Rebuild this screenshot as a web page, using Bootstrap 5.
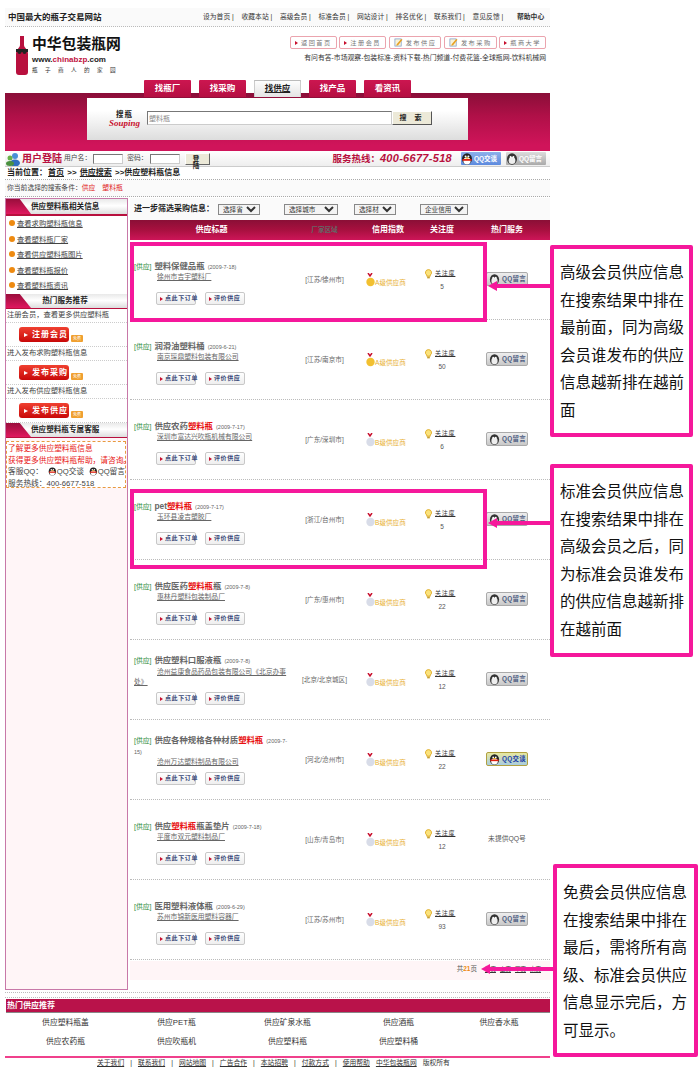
<!DOCTYPE html>
<html lang="zh-CN">
<head>
    <meta charset="UTF-8">
    <meta name="viewport" content="width=device-width, initial-scale=1.0">
    <title>中华包装瓶网 - 供应塑料瓶信息</title>
    <link href="https://cdn.jsdelivr.net/npm/bootstrap@5.3.0/dist/css/bootstrap.min.css" rel="stylesheet">
    <style>
        html, body { margin: 0; background: #fff; }
        body { font-family: "Liberation Sans", "Noto Sans CJK SC", sans-serif; font-size: 7px; line-height: 1.2; color: #333; }
        a { color: inherit; text-decoration: none; }
        .page-wrap { position: relative; width: 700px; height: 1071px; overflow: hidden; }
        .site { width: 545px; margin-left: 5px; padding-top: 8px; }

        /* 顶部 */
        .top-strip { height: 19px; padding: 0 6px 0 3px; background: #fafafa; border-bottom: 1px dotted #bbb; }
        .top-slogan { font-size: 8.5px; font-weight: 700; color: #222; }
        .top-nav span { width: 38.5px; font-size: 6.8px; color: #333; white-space: nowrap; }
        .top-nav span:last-child { width: 27px; margin-left: 6px; font-weight: 700; }
        .head-row { height: 53px; }
        .logo-box { margin-left: 11px; padding-top: 9px; gap: 4px; }
        .logo-name { font-size: 14.8px; line-height: 17px; font-weight: 700; color: #111; white-space: nowrap; }
        .logo-url { font-size: 8px; line-height: 9px; font-weight: 700; color: #222; margin-top: 2px; }
        .logo-url i { font-style: normal; color: #c0123f; }
        .logo-sub { font-size: 5.6px; line-height: 9px; letter-spacing: 7.4px; color: #333; margin-top: 2px; white-space: nowrap; }
        .head-right { padding: 9px 4px 0 0; width: 260px; }
        .head-btn { height: 13px; padding: 0 4px; gap: 3px; background: #fff; border: 1px solid #eba4ae; border-radius: 2px; font-size: 6.2px; letter-spacing: 1.5px; color: #777; white-space: nowrap; }
        .head-btn svg { flex: none; }
        .tri-r { width: 0; height: 0; flex: none; border-left: 3px solid #c8102e; border-top: 2.5px solid transparent; border-bottom: 2.5px solid transparent; }
        .head-links { margin-top: 5px; font-size: 6.85px; color: #333; white-space: nowrap; text-align: right; }

        /* 标签 + 搜索 */
        .tab-strip { height: 13px; padding-left: 139px; gap: 8px; position: relative; z-index: 2; }
        .site-tab { width: 47px; height: 17px; font-size: 8.5px; font-weight: 700; color: #fff; background: linear-gradient(#cc1650, #b50f42); border-top-left-radius: 1px; border-top-right-radius: 1px; }
        .site-tab.on { color: #222; background: linear-gradient(#fff, #e4e4e4); text-decoration: underline; box-shadow: inset 0 1px 0 #bbb, inset 1px 0 0 #ccc, inset -1px 0 0 #ccc; }
        .hero-band { height: 58px; padding: 5px 82px 0; background: linear-gradient(#8a0e38, #b01048 40%, #d0145a 90%); }
        .hero-panel { height: 42px; padding: 13px 0 0 22px; gap: 7px; background: linear-gradient(#fff 30%, #ddd); }
        .sou-logo { width: 31px; line-height: 1; text-align: center; }
        .sou-logo b { display: block; font-size: 7.5px; color: #222; letter-spacing: 1px; }
        .sou-logo i { display: block; font-family: "Liberation Serif", serif; font-size: 9px; font-weight: 700; color: #c8102e; }
        .hero-input { width: 245px; height: 14px; padding: 0 1px; font-size: 7px; color: #888; background: #fff; border: 1px solid #777; border-right-color: #ccc; border-bottom-color: #ccc; }
        .hero-btn { width: 40px; height: 14px; margin-left: -7px; font-size: 7px; font-weight: 700; letter-spacing: 3px; color: #222; background: #ece9d8; border: 1px solid #fff; border-right-color: #555; border-bottom-color: #555; }

        /* 登陆条 */
        .login-strip { height: 16px; padding-left: 1px; background: linear-gradient(#fff, #eee); border-bottom: 1px solid #ccc; }
        .login-title { margin: 0 2px; font-size: 10px; font-weight: 700; color: #b8103e; white-space: nowrap; }
        .login-label { font-size: 6.8px; color: #444; white-space: nowrap; }
        .login-input { width: 30px; height: 10px; margin: 0 4px 0 2px; background: #fff; border: 1px solid #777; border-right-color: #ccc; border-bottom-color: #ccc; }
        .login-btn { width: 25px; height: 12px; margin-left: 1px; font-size: 6.5px; font-weight: 700; letter-spacing: 2px; color: #222; background: #ece9d8; border: 1px solid #fff; border-right-color: #666; border-bottom-color: #666; }
        .hotline { margin-left: auto; margin-right: 9px; font-size: 9.5px; font-weight: 700; color: #b8103e; white-space: nowrap; }
        .hotline i { font-size: 11px; letter-spacing: .3px; }
        .qq-head { width: 40px; height: 13px; margin-right: 5px; gap: 1px; border-radius: 1px; font-size: 6.5px; font-weight: 700; color: #fff; background: linear-gradient(#8db0ea, #5d8ade); }
        .qq-head.gray { margin-right: 4px; background: linear-gradient(#dcdcdc, #aaa); }

        .crumb-row { height: 13px; padding-left: 2px; font-size: 8px; font-weight: 700; color: #222; border-bottom: 1px dotted #aaa; }
        .crumb-row u { margin: 0 1px; }
        .cond-row { height: 17px; padding-left: 2px; font-size: 6.8px; color: #444; background: #fafafa; border-bottom: 1px dotted #aaa; }
        .cond-row em { margin-right: 7px; font-style: normal; color: #e02020; }

        /* 主体 */
        .main-area { height: 792px; margin-top: 1px; }
        .side-col { width: 123px; flex: none; background: #fff5f7; border: 1px solid #c878a8; }
        .side-head { height: 17px; background: linear-gradient(#e9e9e9, #fff 45%, #ddd); border-bottom: 2px solid #b8103e; }
        .side-head.thin { height: 15px; border-bottom-width: 1px; }
        .side-head span { flex: 1; padding-right: 28px; text-align: center; font-size: 7.6px; font-weight: 700; color: #222; white-space: nowrap; }
        .head-flag { width: 25px; flex: none; height: 100%; background: linear-gradient(#9a0e3c, #e0185f); clip-path: polygon(0 0, 55% 0, 100% 100%, 0 100%); }
        .side-list { height: 78px; padding: 1px 0 0 3px; background: #fff; }
        .side-list a { height: 15.5px; gap: 2px; font-size: 7.3px; color: #444; text-decoration: underline; white-space: nowrap; }
        .dot-plus { width: 6px; height: 6px; flex: none; margin-top: -3px; border-radius: 50%; background: #ee8a10; }
        .side-text { height: 13px; padding-left: 1px; font-size: 7.3px; color: #444; white-space: nowrap; }
        .side-sep { height: 25px; padding: 0 0 0 13px; gap: 2px; background: #fff; border-top: 1px dotted #ccc; border-bottom: 1px dotted #ccc; }
        .side-btn { width: 50px; height: 15px; gap: 4px; padding-left: 5px; font-size: 8px; font-weight: 700; letter-spacing: 1px; color: #fff; background: linear-gradient(#f04030, #c80808); border-radius: 3px; white-space: nowrap; }
        .tri-w { width: 0; height: 0; flex: none; border-left: 4px solid #fff; border-top: 2.5px solid transparent; border-bottom: 2.5px solid transparent; }
        .free-tag { width: 12px; height: 7px; margin-top: 8px; font-size: 4px; line-height: 7px; text-align: center; color: #fff; background: #f0a030; border-radius: 1px; }
        .service-box { height: 47px; margin: 3px 1px 0 0; padding: 1px 0 0 1px; font-size: 7.7px; line-height: 11.6px; color: #444; background: #fff; border: 1px dashed #e89a40; white-space: nowrap; }
        .service-box .warn { color: #e81818; }
        .qq-mini { margin-left: 5px; }
        .list-col { width: 420px; margin-left: 2px; }
        .filter-row { height: 22px; padding-left: 4px; background: #fafafa; }
        .filter-row b { font-size: 8px; color: #222; margin-right: 4px; white-space: nowrap; }
        .filter-row select { height: 11px; padding: 0; font-size: 6.6px; line-height: 1; font-family: inherit; color: #333; background-color: #f4f4f4; border: 1px solid #888; border-radius: 0; }
        .th-row { height: 20px; color: #fff; font-size: 8px; font-weight: 700; background: linear-gradient(#8a0f36, #a8103f 50%, #cd1558); }
        .cell-title { width: 163px; flex: none; }
        .cell-area { width: 63px; flex: none; text-align: center; }
        .cell-credit { width: 64px; flex: none; }
        .cell-attn { width: 44px; flex: none; text-align: center; }
        .cell-serv { width: 86px; flex: none; text-align: center; }
        .th-row > div { text-align: center; }
        .supply-row { height: 80px; border-bottom: 1px dotted #bbb; }
        .title-area { height: 52px; padding: 11px 3px 0 4px; display: flex; flex-direction: column; justify-content: center; }
        .sup-title { font-size: 6.8px; line-height: 10.5px; color: #666; }
        .sup-title .lab { margin-right: 3px; font-size: 6.8px; color: #2a8a3a; }
        .sup-title a { font-size: 8.4px; font-weight: 700; color: #111; text-decoration: underline; }
        .sup-title a i { font-style: normal; color: #e81010; }
        .sup-title small { margin-left: 3px; font-size: 5.5px; color: #666; }
        .sup-comp { font-size: 6.8px; line-height: 10.5px; text-indent: 23px; color: #666; text-decoration: underline; }
        .act-row { padding-left: 26px; gap: 9px; }
        .act-btn { height: 13px; padding: 0 3px; gap: 2px; font-size: 6px; font-weight: 700; letter-spacing: .6px; color: #3a4a78; background: linear-gradient(#fff, #eee); border: 1px solid #c8c8c8; border-radius: 2px; white-space: nowrap; }
        .act-btn.wide { width: 40px; }
        .cell-area { font-size: 6.6px; color: #666; white-space: nowrap; margin-top: 0; }
        .credit-wrap { padding-left: 10px; height: 15px; }
        .credit-text { font-size: 6.6px; color: #e8b030; white-space: nowrap; }
        .attn-top { gap: 3px; padding-left: 5px; }
        .attn-top u { font-size: 6px; letter-spacing: .8px; color: #333; white-space: nowrap; }
        .attn-num { margin-top: 4px; font-size: 6.5px; color: #555; }
        .qq-btn { width: 42px; height: 14px; gap: 2px; padding-left: 2px; font-size: 6.4px; font-weight: 700; letter-spacing: .3px; color: #4a5a80; background: linear-gradient(#eee, #c8c8c8); border: 1px solid #aaa; border-radius: 2px; white-space: nowrap; }
        .qq-btn.talk { color: #1a3ea8; background: linear-gradient(#e8e8a0, #a8cce0); border-color: #b0a040; }
        .no-qq { font-size: 6.8px; color: #555; }
        .pager-row { height: 19px; margin-top: 1px; padding: 0 9px 3px 0; gap: 4px; font-size: 6.5px; color: #555; background: #fff5f7; }
        .pager-row b { color: #ee8a10; }
        .pager-row u { font-size: 5.5px; color: #333; }

        /* 底部 */
        .dots-strip { height: 6px; margin-top: 2px; border-top: 1px dotted #bbb; border-bottom: 1px dotted #bbb; }
        .hot-bar { height: 14px; margin: 1px 0 0 1px; padding-left: 1px; font-size: 8px; font-weight: 700; line-height: 14px; color: #fff; background: #b9124a; border-bottom: 1px solid #888; }
        .hot-grid { display: grid; grid-template-columns: 111px 111px 111px 111px 90px; padding-left: 5px; }
        .hot-grid a { height: 19px; font-size: 7.8px; color: #555; text-align: center; line-height: 19px; text-decoration: underline; }
        .pink-line { height: 2px; margin-top: 5px; background: #f0408c; }
        .foot-row { height: 11px; padding-left: 92px; font-size: 6.8px; color: #333; white-space: nowrap; }
        .foot-row u { margin-right: 6px; }
        .foot-row span { margin-right: 6px; }

        /* 说明框 */
        .note-frame { position: absolute; background: #fff; border: 4px solid #f5189b; border-radius: 2px; font-size: 15.5px; line-height: 27.5px; color: #111; }
        .note-1 { left: 550px; top: 245px; width: 143px; height: 192px; padding: 10px 0 0 6px; }
        .note-2 { left: 550px; top: 464px; width: 143px; height: 193px; padding: 10px 0 0 6px; }
        .note-3 { left: 553px; top: 864px; width: 145px; height: 193px; padding: 11px 0 0 6px; }
        .hl-frame { position: absolute; left: 130px; width: 357px; border: 4px solid #f5189b; pointer-events: none; }
        .hl-1 { top: 242px; height: 80px; }
        .hl-2 { top: 489px; height: 80px; }
        .arrow-layer { position: absolute; left: 0; top: 0; }
    </style>
</head>
<body>
<svg width="0" height="0" class="d-block">
    <symbol id="penguin" viewBox="0 0 12 12">
        <ellipse cx="6" cy="6" rx="5" ry="5.7" fill="#333"/>
        <ellipse cx="6" cy="7.5" rx="3.4" ry="3.6" fill="#eee"/>
        <circle cx="4.6" cy="4" r="1" fill="#fff"/><circle cx="7.4" cy="4" r="1" fill="#fff"/>
    </symbol>
    <symbol id="penguin-c" viewBox="0 0 12 12">
        <ellipse cx="6" cy="6" rx="5" ry="5.7" fill="#222"/>
        <ellipse cx="6" cy="8" rx="3.6" ry="3.4" fill="#fff"/>
        <rect x="1.5" y="6" width="9" height="1.8" fill="#e02010"/>
        <circle cx="4.6" cy="3.6" r="1" fill="#fff"/><circle cx="7.4" cy="3.6" r="1" fill="#fff"/>
        <path d="M4 5l2-.8 2 .8-2 .8z" fill="#f5b010"/>
    </symbol>
    <symbol id="bulb" viewBox="0 0 8 11">
        <path d="M4 .5a3.4 3.4 0 0 0-2 6.2V8h4V6.700A3.400 3.400 0 0 0 4 .5z" fill="#fbe27a" stroke="#dca820"/>
        <rect x="2.500" y="8.500" width="3" height="2" fill="#c8a030"/>
    </symbol>
    <symbol id="memo" viewBox="0 0 10 10">
        <rect x="1" y="1" width="7" height="8" fill="#f7f2d8" stroke="#7a9ac8" stroke-width=".8"/>
        <path d="M3 7l5-6 1.500 1-5 6-2 .5z" fill="#e8a020"/>
    </symbol>
</svg>

<div class="page-wrap">
    <div class="site">
        <!-- 顶部 -->
        <div class="top-strip d-flex align-items-center justify-content-between">
            <div class="top-slogan">中国最大的瓶子交易网站</div>
            <div class="top-nav d-flex">
                <span>设为首页 |</span><span>收藏本站 |</span><span>高级会员 |</span><span>标准会员 |</span><span>网站设计 |</span><span>排名优化 |</span><span>联系我们 |</span><span>意见反馈 |</span><span>帮助中心</span>
            </div>
        </div>
        <div class="head-row d-flex justify-content-between">
            <div class="logo-box d-flex">
                <svg width="12" height="39" viewBox="0 0 12 39" class="flex-none">
                    <path d="M4 0h4v9c0 3 4 4 4 9v18c0 2-1 3-3 3H3c-2 0-3-1-3-3V18c0-5 4-6 4-9z" fill="#b8103e"/>
                    <rect x="0" y="13" width="12" height="3" fill="#222"/>
                    <circle cx="3.500" cy="16" r="2" fill="#222"/><circle cx="8.500" cy="16" r="2" fill="#222"/>
                </svg>
                <div>
                    <div class="logo-name">中华包装瓶网</div>
                    <div class="logo-url">www.<i>chinabzp</i>.com</div>
                    <div class="logo-sub">瓶子商人的家园</div>
                </div>
            </div>
            <div class="head-right">
                <div class="d-flex justify-content-between">
                    <a class="head-btn d-flex align-items-center"><i class="tri-r"></i>返回首页</a>
                    <a class="head-btn d-flex align-items-center"><i class="tri-r"></i>注册会员</a>
                    <a class="head-btn d-flex align-items-center"><svg width="9" height="9"><use href="#memo"/></svg>发布供应</a>
                    <a class="head-btn d-flex align-items-center"><svg width="9" height="9"><use href="#memo"/></svg>发布采购</a>
                    <a class="head-btn d-flex align-items-center"><i class="tri-r"></i>瓶商大学</a>
                </div>
                <div class="head-links">有问有答-市场观察-包装标准-资料下载-热门频道-付费花篮-全球瓶网-饮料机械网</div>
            </div>
        </div>

        <!-- 标签 -->
        <div class="tab-strip d-flex">
            <a class="site-tab d-flex align-items-center justify-content-center">找瓶厂</a>
            <a class="site-tab d-flex align-items-center justify-content-center">找采购</a>
            <a class="site-tab on d-flex align-items-center justify-content-center">找供应</a>
            <a class="site-tab d-flex align-items-center justify-content-center">找产品</a>
            <a class="site-tab d-flex align-items-center justify-content-center">看资讯</a>
        </div>
        <div class="hero-band">
            <div class="hero-panel d-flex align-items-start">
                <div class="sou-logo"><b>搜瓶</b><i>Souping</i></div>
                <input class="hero-input" type="text" value="塑料瓶">
                <button class="hero-btn" type="button">搜 索</button>
            </div>
        </div>

        <!-- 登陆条 -->
        <div class="login-strip d-flex align-items-center">
            <svg width="14" height="14" viewBox="0 0 14 14" class="flex-none">
                <circle cx="9" cy="4" r="3" fill="#4a8fd8"/><ellipse cx="9" cy="11" rx="5" ry="3.500" fill="#2f6fc0"/>
                <circle cx="4" cy="6" r="2.500" fill="#6ab04a"/><ellipse cx="4" cy="11.500" rx="4" ry="2.500" fill="#4a9040"/>
            </svg>
            <span class="login-title">用户登陆</span>
            <span class="login-label">用户名：</span><span class="login-input"></span>
            <span class="login-label">密码：</span><span class="login-input"></span>
            <button class="login-btn" type="button">登 陆</button>
            <span class="hotline">服务热线：<i>400-6677-518</i></span>
            <span class="qq-head d-flex align-items-center"><svg width="12" height="12"><use href="#penguin-c"/></svg>QQ交谈</span>
            <span class="qq-head gray d-flex align-items-center"><svg width="12" height="12"><use href="#penguin"/></svg>QQ留言</span>
        </div>
        <div class="crumb-row d-flex align-items-center">当前位置：<u>首页</u>&nbsp;&gt;&gt;&nbsp;<u>供应搜索</u>&nbsp;&gt;&gt;供应塑料瓶信息</div>
        <div class="cond-row d-flex align-items-center">你当前选择的搜索条件：<em>供应</em><em>塑料瓶</em></div>

        <!-- 主体 -->
        <div class="main-area d-flex">
            <div class="side-col">
                <div class="side-head d-flex align-items-center"><i class="head-flag"></i><span>供应塑料瓶相关信息</span></div>
                <div class="side-list">
                    <a class="d-flex align-items-center"><i class="dot-plus"></i>查看求购塑料瓶信息</a>
                    <a class="d-flex align-items-center"><i class="dot-plus"></i>查看塑料瓶厂家</a>
                    <a class="d-flex align-items-center"><i class="dot-plus"></i>查看供应塑料瓶图片</a>
                    <a class="d-flex align-items-center"><i class="dot-plus"></i>查看塑料瓶报价</a>
                    <a class="d-flex align-items-center"><i class="dot-plus"></i>查看塑料瓶资讯</a>
                </div>
                <div class="side-head thin d-flex align-items-center"><i class="head-flag"></i><span>热门服务推荐</span></div>
                <div class="side-text d-flex align-items-center bg-white">注册会员，查看更多供应塑料瓶</div>
                <div class="side-sep d-flex align-items-center"><a class="side-btn d-flex align-items-center"><i class="tri-w"></i>注册会员</a><span class="free-tag">免费</span></div>
                <div class="side-text d-flex align-items-center bg-white">进入发布求购塑料瓶信息</div>
                <div class="side-sep d-flex align-items-center"><a class="side-btn d-flex align-items-center"><i class="tri-w"></i>发布采购</a><span class="free-tag">免费</span></div>
                <div class="side-text d-flex align-items-center bg-white">进入发布供应塑料瓶信息</div>
                <div class="side-sep d-flex align-items-center"><a class="side-btn d-flex align-items-center"><i class="tri-w"></i>发布供应</a><span class="free-tag">免费</span></div>
                <div class="side-head thin d-flex align-items-center"><i class="head-flag"></i><span>供应塑料瓶专属客服</span></div>
                <div class="service-box">
                    <div class="warn">了解更多供应塑料瓶信息</div>
                    <div class="warn">获得更多供应塑料瓶帮助，请咨询。</div>
                    <div class="d-flex align-items-center">客服QQ：<svg class="qq-mini" width="9" height="9"><use href="#penguin-c"/></svg>QQ交谈<svg class="qq-mini" width="9" height="9"><use href="#penguin-c"/></svg>QQ留言</div>
                    <div>服务热线：400-6677-518</div>
                </div>
            </div>

            <div class="list-col">
                <div class="filter-row d-flex align-items-center">
                    <b>进一步筛选采购信息：</b>
                    <select style="width:42px"><option>选择省份</option></select>
                    <select class="ms-4" style="width:54px"><option>选择城市</option></select>
                    <select class="ms-3" style="width:42px"><option>选择材质</option></select>
                    <select class="ms-4" style="width:48px"><option>企业信用度</option></select>
                </div>
                <div class="th-row d-flex align-items-center">
                    <div class="cell-title">供应标题</div>
                    <div class="cell-area">厂家区域</div>
                    <div class="cell-credit">信用指数</div>
                    <div class="cell-attn">关注度</div>
                    <div class="cell-serv">热门服务</div>
                </div>
                <div id="supplyList"></div>
                <div class="pager-row d-flex align-items-center justify-content-end">
                    <span class="me-1">共<b>21</b>页</span><u>首页</u><u>上页</u><u>下页</u><u>末页</u>
                </div>
            </div>
        </div>

        <!-- 底部 -->
        <div class="dots-strip"></div>
        <div class="hot-bar">热门供应推荐</div>
        <div class="hot-grid">
            <a>供应塑料瓶盖</a><a>供应PET瓶</a><a>供应矿泉水瓶</a><a>供应酒瓶</a><a>供应香水瓶</a>
            <a>供应农药瓶</a><a>供应吹瓶机</a><a>供应塑料瓶</a><a>供应塑料桶</a>
        </div>
        <div class="pink-line"></div>
        <div class="foot-row d-flex align-items-center">
            <u>关于我们</u><span>|</span><u>联系我们</u><span>|</span><u>网站地图</u><span>|</span><u>广告合作</u><span>|</span><u>本站招聘</u><span>|</span><u>付款方式</u><span>|</span><u>使用帮助</u><u>中华包装瓶网</u>版权所有
        </div>
    </div>

    <!-- 说明标注 -->
    <div class="hl-frame hl-1"></div>
    <div class="hl-frame hl-2"></div>
    <svg class="arrow-layer" width="700" height="1071">
        <g fill="#f5189b">
            <rect x="495" y="284" width="56" height="4"/><path d="M488 286l9-5v10z"/>
            <rect x="495" y="521" width="56" height="4"/><path d="M488 523l9-5v10z"/>
            <rect x="488" y="967" width="66" height="4"/><path d="M481 969l9-5v10z"/>
        </g>
    </svg>
    <div class="note-frame note-1">高级会员供应信息在搜索结果中排在最前面，同为高级会员谁发布的供应信息越新排在越前面</div>
    <div class="note-frame note-2">标准会员供应信息在搜索结果中排在高级会员之后，同为标准会员谁发布的供应信息越新排在越前面</div>
    <div class="note-frame note-3">免费会员供应信息在搜索结果中排在最后，需将所有高级、标准会员供应信息显示完后，方可显示。</div>
</div>

<script src="https://cdn.jsdelivr.net/npm/bootstrap@5.3.0/dist/js/bootstrap.bundle.min.js"></script>
<script>
    // 供应列表数据
    const supplies = [
        { title: '塑料保健品瓶', date: '2009-7-18', comp: '徐州市吉宇塑料厂', area: '江苏/徐州市', level: 'A', attn: 5, qq: 'msg' },
        { title: '润滑油塑料桶', date: '2009-6-21', comp: '南京琛鼎塑料包装有限公司', area: '江苏/南京市', level: 'A', attn: 50, qq: 'msg' },
        { title: '供应农药<i>塑料瓶</i>', date: '2009-7-17', comp: '深圳市富达兴吹瓶机械有限公司', area: '广东/深圳市', level: 'B', attn: 6, qq: 'msg' },
        { title: 'pet<i>塑料瓶</i>', date: '2009-7-17', comp: '玉环县凌吉塑胶厂', area: '浙江/台州市', level: 'B', attn: 5, qq: 'msg' },
        { title: '供应医药<i>塑料瓶</i>瓶', date: '2009-7-8', comp: '惠林丹塑料包装制品厂', area: '广东/惠州市', level: 'B', attn: 22, qq: 'msg' },
        { title: '供应塑料口服液瓶', date: '2009-7-8', comp: '沧州益康食品药品包装有限公司《北京办事处》', area: '北京/北京城区', level: 'B', attn: 12, qq: 'msg' },
        { title: '供应各种规格各种材质<i>塑料瓶</i>', date: '2009-7-15', comp: '沧州万达塑料制品有限公司', area: '河北/沧州市', level: 'B', attn: 22, qq: 'talk' },
        { title: '供应<i>塑料瓶</i>瓶盖垫片', date: '2009-7-18', comp: '平度市双元塑料制品厂', area: '山东/青岛市', level: 'B', attn: 12, qq: 'none' },
        { title: '医用塑料液体瓶', date: '2009-6-29', comp: '苏州市锦新医用塑料容器厂', area: '江苏/苏州市', level: 'B', attn: 93, qq: 'msg' }
    ];

    function medal(level) {
        const fill = level === 'A' ? '#f2c030' : '#d8dce8';
        return `<svg width="9" height="14" viewBox="0 0 9 14" class="flex-none">
            <path d="M2 0l2 3 2-3" fill="none" stroke="#c8102e" stroke-width="1.500"/>
            <circle cx="4.500" cy="9" r="4.200" fill="${fill}"/></svg>`;
    }

    function qqCell(type) {
        if (type === 'none') return '<span class="no-qq">未提供QQ号</span>';
        if (type === 'talk') return '<a class="qq-btn talk d-inline-flex align-items-center"><svg width="11" height="11"><use href="#penguin-c"/></svg>QQ交谈</a>';
        return '<a class="qq-btn d-inline-flex align-items-center"><svg width="11" height="11"><use href="#penguin"/></svg>QQ留言</a>';
    }

    // 行を描画
    document.getElementById('supplyList').innerHTML = supplies.map(s => `
        <div class="supply-row d-flex align-items-center">
            <div class="cell-title align-self-start">
                <div class="title-area">
                    <div class="sup-title"><span class="lab">[供应]</span><a>${s.title}</a><small>(${s.date})</small></div>
                    <div class="sup-comp">${s.comp}</div>
                </div>
                <div class="act-row d-flex">
                    <a class="act-btn wide d-flex align-items-center"><i class="tri-r"></i>点此下订单</a>
                    <a class="act-btn wide d-flex align-items-center"><i class="tri-r"></i>评价供应</a>
                </div>
            </div>
            <div class="cell-area">[${s.area}]</div>
            <div class="cell-credit"><div class="credit-wrap d-flex align-items-end">${medal(s.level)}<span class="credit-text">${s.level}级供应商</span></div></div>
            <div class="cell-attn">
                <div class="attn-top d-flex align-items-center"><svg width="7" height="10"><use href="#bulb"/></svg><u>关注度</u></div>
                <div class="attn-num">${s.attn}</div>
            </div>
            <div class="cell-serv">${qqCell(s.qq)}</div>
        </div>`).join('');
</script>
</body>
</html>
